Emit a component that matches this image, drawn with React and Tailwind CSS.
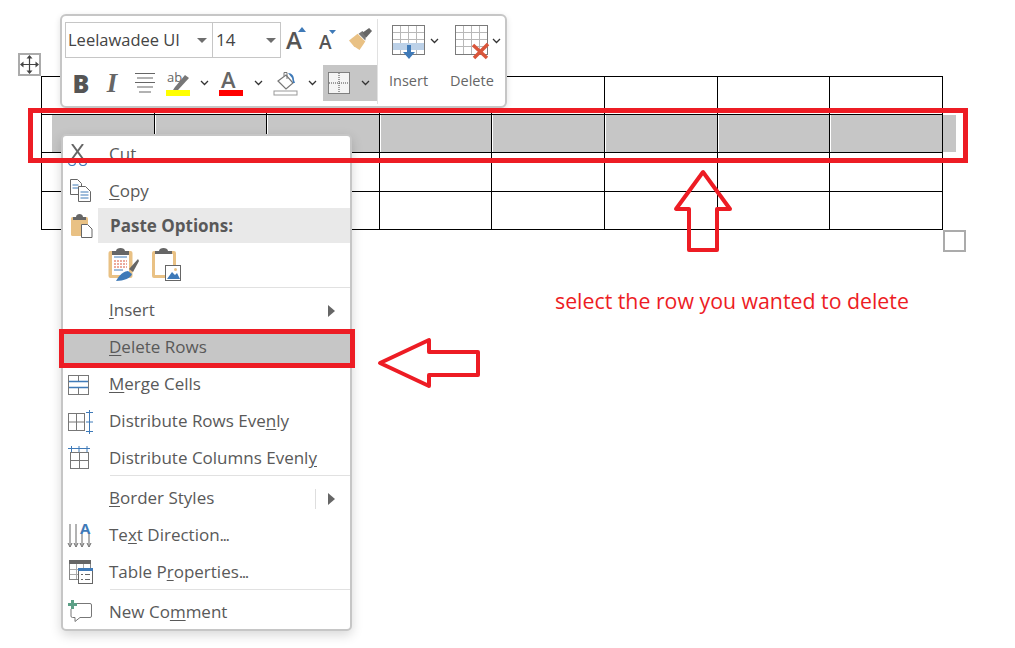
const colWidths = [113, 112, 113, 112, 113, 113, 112, 113];
const rowHeights = [38, 38, 39, 38];

function Chevron({ className = '' }) {
  return (
    <svg width="9" height="6" viewBox="0 0 9 6" className={className}>
      <path d="M1 1l3.5 3.5L8 1" fill="none" stroke="#333" strokeWidth="1.3" />
    </svg>
  );
}

function Caret() {
  return (
    <svg width="10" height="5" viewBox="0 0 10 5">
      <path d="M0 0h10L5 5z" fill="#6e6e6e" />
    </svg>
  );
}

function MoveHandle() {
  return (
    <div className="absolute left-[18px] top-[53px] w-[23px] h-[23px] border-2 border-[#ababab] bg-white flex items-center justify-center">
      <svg width="19" height="19" viewBox="0 0 19 19">
        <path d="M9.5 2v15M2 9.5h15" stroke="#444" strokeWidth="1.2" fill="none" />
        <path d="M9.5 0l3 3.5h-6zM9.5 19l3-3.5h-6zM0 9.5l3.5-3v6zM19 9.5l-3.5-3v6z" fill="#444" />
      </svg>
    </div>
  );
}

function WordTable() {
  return (
    <div className="ml-[41px] w-[902px] border-l border-t border-black">
      {rowHeights.map((h, r) => (
        <div key={r} className="flex" style={{ height: h }}>
          {colWidths.map((w, c) => (
            <div key={c} className="border-r border-b border-black flex" style={{ width: w }}>
              {r === 1 && (
                <div className={`flex-1 bg-[#c6c6c6] ${c === 0 ? 'ml-[10px]' : 'ml-px'}`} />
              )}
            </div>
          ))}
        </div>
      ))}
    </div>
  );
}

function GrowFont() {
  return (
    <svg width="28" height="28" viewBox="0 0 28 28" className="overflow-visible">
      <text x="3" y="23" fontSize="24" fontWeight="600" fill="#555" fontFamily="Open Sans, sans-serif">A</text>
      <path d="M15 6h8l-4-5z" fill="#3f7ab8" />
    </svg>
  );
}

function ShrinkFont() {
  return (
    <svg width="26" height="28" viewBox="0 0 26 28" className="overflow-visible">
      <text x="5" y="23" fontSize="19" fontWeight="600" fill="#555" fontFamily="Open Sans, sans-serif">A</text>
      <path d="M15 4h7l-3.500 4z" fill="#3f7ab8" />
    </svg>
  );
}

function Brush() {
  return (
    <svg width="25" height="23" viewBox="0 0 26 24">
      <path d="M1 13l9-7 8 8-6 9-6-4z" fill="#e9c184" />
      <path d="M11 6l4-3 4 4-1 6z" fill="#777" />
      <path d="M15 5l7-5 3 3-6 7z" fill="#666" />
    </svg>
  );
}

function AlignIcon() {
  return (
    <svg width="22" height="22" viewBox="0 0 22 22">
      <path d="M1 1.500h20M3 6h16M1 10.500h20M3 15h16M5 20h12" stroke="#666" strokeWidth="1.2" />
    </svg>
  );
}

function Highlighter() {
  return (
    <svg width="24" height="25" viewBox="0 0 24 25" className="overflow-visible">
      <text x="1" y="11" fontSize="13" fill="#666" fontFamily="Open Sans, sans-serif">ab</text>
      <path d="M9 16l10-12 4 3-11 12-5 0z" fill="#777" />
      <rect y="19" width="24" height="6" fill="#ffff00" />
    </svg>
  );
}

function FontColor() {
  return (
    <svg width="24" height="25" viewBox="0 0 24 25" className="overflow-visible">
      <text x="2" y="17" fontSize="22" fontWeight="600" fill="#666" fontFamily="Open Sans, sans-serif">A</text>
      <rect y="19" width="24" height="6" fill="#ff0000" />
    </svg>
  );
}

function Bucket() {
  return (
    <svg width="25" height="25" viewBox="0 0 25 25">
      <path d="M5 10l8-6 7 8-7 6z" fill="#fff" stroke="#777" strokeWidth="1.2" />
      <path d="M11 5V1.500h3V8" fill="none" stroke="#777" />
      <path d="M15 2c4 0 6 3 6 7l1 3-2 0-1-5z" fill="#3f7ab8" />
      <rect x="1" y="20" width="23" height="4" fill="#fff" stroke="#999" />
    </svg>
  );
}

function BordersIcon() {
  return (
    <svg width="22" height="22" viewBox="0 0 22 22">
      <rect x="0.5" y="0.5" width="21" height="21" fill="#f4f4f4" stroke="#222" strokeDasharray="1 1" />
      <path d="M11 1v20M1 11h20" stroke="#444" strokeDasharray="1 1" />
    </svg>
  );
}

function GridBase() {
  return (
    <>
      <rect x="0.5" y="0.5" width="32" height="29" fill="#fff" stroke="#7a7a7a" />
      <path d="M8.500 1v28M16.500 1v28M24.500 1v28M1 7.500h31M1 14.500h31M1 21.500h31" stroke="#b8b8b8" />
    </>
  );
}

function InsertRowIcon() {
  return (
    <svg width="34" height="35" viewBox="0 0 34 35">
      <GridBase />
      <rect x="1" y="18" width="31" height="7" fill="#bcd1e8" />
      <path d="M15 20h4v7h4l-6 7-6-7h4z" fill="#3f7ab8" />
    </svg>
  );
}

function DeleteRowIcon() {
  return (
    <svg width="36" height="35" viewBox="0 0 36 35">
      <GridBase />
      <path d="M18 20l14 13M33 19L19 33" stroke="#d9553a" strokeWidth="3.5" fill="none" />
    </svg>
  );
}

function MiniToolbar() {
  return (
    <div className="absolute left-[60px] top-[14px] w-[447px] h-[94px] bg-white border-2 border-[#c6c6c6] rounded-md flex shadow-[0_2px_6px_rgba(0,0,0,0.12)]">
      <div className="w-[315px] pl-[3px] pt-[6px] shrink-0">
        <div className="flex h-[36px]">
          <div className="w-[148px] border border-[#c6c6c6] flex items-center justify-between pl-[2px] pr-[5px] text-[16.500px] text-[#444]">
            <span>Leelawadee UI</span>
            <Caret />
          </div>
          <div className="w-[69px] -ml-px border border-[#c6c6c6] flex items-center justify-between pl-[3px] pr-[4px] text-[17px] text-[#444]">
            <span>14</span>
            <Caret />
          </div>
          <div className="flex items-center pl-[2px] gap-[3px] -mt-[1px]">
            <GrowFont />
            <ShrinkFont />
            <div className="ml-[5px]"><Brush /></div>
          </div>
        </div>
        <div className="flex h-[36px] mt-[7px] items-center">
          <div className="w-[32px] text-center text-[25px] leading-none font-extrabold text-[#555]">B</div>
          <div className="w-[30px] text-center text-[27px] leading-none italic font-bold text-[#666] font-['Liberation_Serif',serif]">I</div>
          <div className="w-[36px] flex justify-center"><AlignIcon /></div>
          <div className="w-[30px] flex justify-center"><Highlighter /></div>
          <div className="w-[22px] flex justify-center"><Chevron /></div>
          <div className="w-[32px] flex justify-center"><FontColor /></div>
          <div className="w-[22px] flex justify-center"><Chevron /></div>
          <div className="w-[32px] flex justify-center"><Bucket /></div>
          <div className="w-[22px] flex justify-center"><Chevron /></div>
          <div className="w-[54px] h-full bg-[#c6c6c6] flex items-center pl-[5px]">
            <BordersIcon />
            <Chevron className="ml-[11px]" />
          </div>
        </div>
      </div>
      <div className="w-px h-[85px] mt-[3px] bg-[#e1e1e1]" />
      <div className="w-[62px] flex flex-col pl-[14px] pt-[9px] shrink-0">
        <div className="flex items-start h-[36px]">
          <InsertRowIcon />
          <Chevron className="ml-[4px] mt-[13px]" />
        </div>
        <span className="text-[14.500px] -ml-[3px] mt-[9px] text-[#666]">Insert</span>
      </div>
      <div className="flex-1 flex flex-col pl-[15px] pt-[9px]">
        <div className="flex items-start h-[36px]">
          <DeleteRowIcon />
          <Chevron className="ml-[3px] mt-[13px] -translate-x-[2px]" />
        </div>
        <span className="text-[14.500px] -ml-[5px] mt-[9px] text-[#666]">Delete</span>
      </div>
    </div>
  );
}

function Scissors() {
  return (
    <svg width="20" height="22" viewBox="0 0 20 22">
      <path d="M4 0l11 15M15 0L4 15" stroke="#666" strokeWidth="2" fill="none" />
      <circle cx="4" cy="18" r="3.500" fill="none" stroke="#3f7ab8" strokeWidth="1.2" />
      <circle cx="15" cy="18" r="3.500" fill="none" stroke="#3f7ab8" strokeWidth="1.2" />
    </svg>
  );
}

function CopyIcon() {
  return (
    <svg width="21" height="23" viewBox="0 0 21 23" className="ml-[2px]">
      <path d="M.5.5h7l4 4v11H.5z" fill="#fff" stroke="#666" />
      <path d="M2.500 6h6M2.500 9h6" stroke="#3f7ab8" />
      <path d="M8.500 7.500h7l5 5v10h-12z" fill="#fff" stroke="#666" />
      <path d="M10.500 13h8M10.500 16h8M10.500 19h8" stroke="#3f7ab8" />
    </svg>
  );
}

function PasteIcon() {
  return (
    <svg width="22" height="24" viewBox="0 0 22 24" className="ml-[3px]">
      <rect x="0" y="3" width="17" height="19" rx="1.500" fill="#e9c184" />
      <path d="M5 3c0-4 7-4 7 0h3v3H2V3z" fill="#666" />
      <path d="M10.500 10.500h6l4.500 4.500v8.500H10.500z" fill="#fff" stroke="#666" />
    </svg>
  );
}

function PasteFormatIcon() {
  return (
    <svg width="32" height="34" viewBox="0 0 32 34">
      <rect x="0.5" y="3" width="24" height="27" rx="2" fill="#e9c184" />
      <rect x="4" y="6" width="17" height="21" fill="#fff" />
      <path d="M8 3c0-4 9-4 9 0h4v4H4V3z" fill="#666" />
      <path d="M6 9h13" stroke="#3f7ab8" />
      <path d="M6 13h13M6 16h13M6 19h13" stroke="#d9553a" strokeDasharray="2 1" />
      <path d="M6 22h9" stroke="#3f7ab8" />
      <path d="M21 21l9-10 1 2-6 11z" fill="#666" />
      <path d="M8 33c2-3 5-9 12-10l4 3c-1 4-8 7-16 7z" fill="#3f7ab8" />
    </svg>
  );
}

function PastePictureIcon() {
  return (
    <svg width="30" height="34" viewBox="0 0 30 34">
      <path d="M0 5a2 2 0 012-2h20a2 2 0 012 2v12h-3V6H3v21h10v3H2a2 2 0 01-2-2z" fill="#e9c184" />
      <path d="M7 3c0-4 9-4 9 0h4v3H3V3z" fill="#666" />
      <rect x="13.500" y="17.500" width="15" height="15" fill="#fff" stroke="#666" />
      <path d="M15 31l5-7 3 3 2-2 3 6z" fill="#3f7ab8" />
      <circle cx="23.500" cy="21.500" r="1.500" fill="#e9c184" />
    </svg>
  );
}

function MergeIcon() {
  return (
    <svg width="22" height="20" viewBox="0 0 22 20">
      <rect x="0.5" y="0.5" width="20" height="19" fill="#fff" stroke="#777" />
      <path d="M10.500 1v5M10.500 13v6" stroke="#777" />
      <path d="M1 6.500h19M1 12.500h19" stroke="#3f7ab8" strokeWidth="1.3" />
    </svg>
  );
}

function DistRowsIcon() {
  return (
    <svg width="25" height="24" viewBox="0 0 25 24">
      <rect x="0.5" y="3.500" width="16" height="17" fill="#fff" stroke="#777" />
      <path d="M1 12h15M8.500 4v16" stroke="#777" />
      <path d="M18 2.500h7M18 12h7M18 21.500h7M21.500 0v24" stroke="#3f7ab8" />
    </svg>
  );
}

function DistColsIcon() {
  return (
    <svg width="23" height="23" viewBox="0 0 23 23">
      <path d="M0 2.500h22M3.500 0v7M11 0v7M19 0v7" stroke="#3f7ab8" />
      <rect x="2.500" y="6.500" width="18" height="16" fill="#fff" stroke="#777" />
      <path d="M3 14.500h17M11.500 7v15" stroke="#777" />
    </svg>
  );
}

function TextDirIcon() {
  return (
    <svg width="25" height="25" viewBox="0 0 25 25" className="overflow-visible">
      <path d="M2 1v21M8 1v21M14 11v11M21 11v11" stroke="#666" />
      <path d="M0 20l2 4 2-4M6 20l2 4 2-4M12 20l2 4 2-4M19 20l2 4 2-4" fill="none" stroke="#666" />
      <text x="12" y="11" fontSize="15" fontWeight="700" fill="#3f7ab8" fontFamily="Open Sans, sans-serif">A</text>
    </svg>
  );
}

function TablePropsIcon() {
  return (
    <svg width="24" height="24" viewBox="0 0 24 24" className="ml-px">
      <rect x="0.5" y="0.5" width="21" height="19" fill="#fff" stroke="#888" />
      <rect x="0" y="0" width="22" height="4" fill="#666" />
      <path d="M1 9.500h20M1 14.500h20M7.500 4v15M14.500 4v15" stroke="#aaa" />
      <rect x="9.500" y="8.500" width="14" height="15" fill="#fff" stroke="#666" />
      <rect x="9" y="8" width="15" height="3" fill="#3f7ab8" />
      <path d="M12 14.500h2M16 14.500h5M12 19.500h2M16 19.500h5" stroke="#666" />
    </svg>
  );
}

function CommentIcon() {
  return (
    <svg width="24" height="22" viewBox="0 0 24 22">
      <path d="M6 3.500h16a1.500 1.500 0 011.500 1.500v11a1.500 1.500 0 01-1.500 1.500H12l-5 4v-4H4.500A1.500 1.500 0 013 16V9" fill="none" stroke="#777" />
      <path d="M3 0h3v3h3v3H6v3H3V6H0V3h3z" fill="#5c9f86" />
    </svg>
  );
}

function MenuRow({ icon, height = 37, className = '', textClass = '', children, arrow, divider }) {
  return (
    <div className={`flex items-center ${className}`} style={{ height }}>
      <div className="w-[46px] shrink-0 flex pl-[5px]">{icon}</div>
      <span className={`flex-1 ${textClass}`}>{children}</span>
      {divider && <div className="w-px h-[20px] bg-[#dedede] mr-[12px]" />}
      {arrow && (
        <svg width="7" height="12" viewBox="0 0 7 12" className="mr-[15px]">
          <path d="M0 0l7 6-7 6z" fill="#666" />
        </svg>
      )}
    </div>
  );
}

function Sep() {
  return <div className="ml-[47px] h-px bg-[#e1e1e1]" />;
}

function Dots() {
  return <span className="tracking-[-1.5px]">...</span>;
}

function ContextMenu() {
  return (
    <div className="absolute left-[61px] top-[134px] w-[291px] h-[497px] bg-white border-2 border-[#c6c6c6] rounded-[5px] text-[17px] text-[#595959] shadow-[0_4px_12px_rgba(0,0,0,0.16)]">
      <MenuRow textClass="-translate-y-px" icon={<Scissors />}>Cut</MenuRow>
      <MenuRow height={35} icon={<CopyIcon />}><u className="underline-offset-2">C</u>opy</MenuRow>
      <div className="flex h-[35px]">
        <div className="w-[35px] shrink-0 flex items-center pl-[5px]"><PasteIcon /></div>
        <div className="flex-1 bg-[#e9e9e9] flex items-center pl-[12px] font-bold">Paste Options:</div>
      </div>
      <div className="h-[44px] flex items-center pl-[45px] gap-[12px]">
        <PasteFormatIcon />
        <PastePictureIcon />
      </div>
      <Sep />
      <MenuRow textClass="-translate-y-px" className="mt-[4px]" arrow><u className="underline-offset-2">I</u>nsert</MenuRow>
      <MenuRow textClass="-translate-y-px" className="bg-[#c6c6c6]"><u className="underline-offset-2">D</u>elete Rows</MenuRow>
      <MenuRow textClass="-translate-y-px" icon={<MergeIcon />}><u className="underline-offset-2">M</u>erge Cells</MenuRow>
      <MenuRow textClass="-translate-y-px" icon={<DistRowsIcon />}>Distribute Rows Eve<u className="underline-offset-2">n</u>ly</MenuRow>
      <MenuRow height={35} icon={<DistColsIcon />}>Distribute Columns Evenl<u className="underline-offset-2">y</u></MenuRow>
      <Sep />
      <MenuRow textClass="-translate-y-px" className="mt-[4px]" arrow divider><u className="underline-offset-2">B</u>order Styles</MenuRow>
      <MenuRow textClass="-translate-y-px" icon={<TextDirIcon />}>Te<u className="underline-offset-2">x</u>t Direction<Dots /></MenuRow>
      <MenuRow height={35} icon={<TablePropsIcon />}>Table P<u className="underline-offset-2">r</u>operties<Dots /></MenuRow>
      <Sep />
      <MenuRow height={34} textClass="translate-y-px" className="mt-[4px]" icon={<CommentIcon />}>New Co<u className="underline-offset-2">m</u>ment</MenuRow>
    </div>
  );
}

function Annotations() {
  return (
    <>
      <div className="absolute left-[28px] top-[108px] w-[940px] h-[55px] border-[5px] border-[#ed1c24]" />
      <div className="absolute left-[59px] top-[329px] w-[296px] h-[39px] border-[5px] border-[#ed1c24]" />
      <svg className="absolute left-[660px] top-[160px]" width="90" height="100" viewBox="0 0 90 100">
        <path d="M43 12L16 49H29V90H57V49H70z" fill="none" stroke="#ed1c24" strokeWidth="4" strokeLinejoin="round" />
      </svg>
      <svg className="absolute left-[370px] top-[330px]" width="120" height="66" viewBox="0 0 120 66">
        <path d="M10 33L59 10V22H108V45H59V56z" fill="none" stroke="#ed1c24" strokeWidth="4" strokeLinejoin="round" />
      </svg>
      <div className="absolute left-[555px] top-[287px] text-[21.300px] leading-[28px] text-[#ed1c24]">
        select the row you wanted to delete
      </div>
    </>
  );
}

export default function App() {
  return (
    <div className="relative w-[1015px] h-[648px] overflow-hidden bg-white pt-[76px] font-['Open_Sans',sans-serif]">
      <WordTable />
      <div className="absolute left-[943px] top-[115px] w-[13px] h-[37px] bg-[#c6c6c6]" />
      <div className="absolute left-[943px] top-[230px] w-[23px] h-[22px] border-2 border-[#ababab]" />
      <MoveHandle />
      <MiniToolbar />
      <ContextMenu />
      <Annotations />
    </div>
  );
}
